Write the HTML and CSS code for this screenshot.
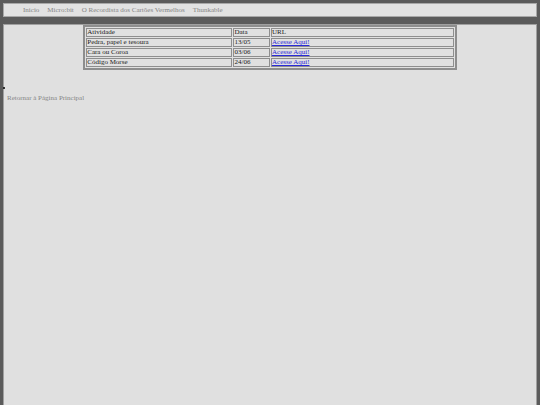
FILE: index.html
```html
<!DOCTYPE html>
<html lang="pt">
<head>
<meta charset="utf-8">
<title>Atividades</title>
<link rel="stylesheet" href="styles.css">
</head>
<body>
<nav class="topnav">
  <a href="#">Inicio</a>
  <a href="#">Micro:bit</a>
  <a href="#">O Recordista dos Cartões Vermelhos</a>
  <a href="#">Thunkable</a>
</nav>
<main class="content">
  <table class="activities">
    <tr><td class="c-name">Atividade</td><td class="c-date">Data</td><td class="c-url">URL</td></tr>
    <tr><td>Pedra, papel e tesoura</td><td>13/05</td><td><a href="#">Acesse Aqui!</a></td></tr>
    <tr><td>Cara ou Coroa</td><td>03/06</td><td><a href="#">Acesse Aqui!</a></td></tr>
    <tr><td>Código Morse</td><td>24/06</td><td><a href="#">Acesse Aqui!</a></td></tr>
  </table>
  <ul class="bullets"><li>&nbsp;</li></ul>
  <a class="back" href="#">Retornar à Página Principal</a>
</main>
</body>
</html>
```
FILE: styles.css
```css
html, body { height: 100%; }
body {
  margin: 0;
  padding: 3px 3px 0 3px;
  background: #5b5b5b;
  font-family: "Liberation Serif", "Times New Roman", serif;
  font-size: 7px;
  box-sizing: border-box;
  display: flex;
  flex-direction: column;
}
.topnav {
  background: #e2e2e2;
  border: 1px solid #a8a8a8;
  height: 12px;
  display: flex;
  align-items: center;
  padding-left: 19px;
  gap: 8px;
}
.topnav a {
  color: #858585;
  text-decoration: none;
  font-size: 7px;
}
.content {
  margin-top: 7px;
  flex: 1;
  background: #e0e0e0;
  border: 1px solid #a0a0a0;
  border-bottom: none;
}
.activities {
  width: 70.2%;
  margin: 0 auto;
  border: 2px solid #8e8e8e;
  border-collapse: separate;
  border-spacing: 1px;
  background: #e0e0e0;
  font-size: 7px;
  color: #1a1a1a;
}
.activities td {
  border: 1px solid #8e8e8e;
  padding: 0;
  height: 7px;
  line-height: 7px;
}
.c-name { width: 40%; }
.c-date { width: 10%; }
.activities a { color: #2a2ad8; }
.bullets {
  margin: 15px 0 0 0;
  padding-left: 10px;
  list-style: disc;
  color: #000;
}
.bullets li { font-size: 7px; line-height: 6px; }
.back {
  display: block;
  margin: 3px 0 0 3px;
  color: #858585;
  text-decoration: none;
  font-size: 7px;
}
```
